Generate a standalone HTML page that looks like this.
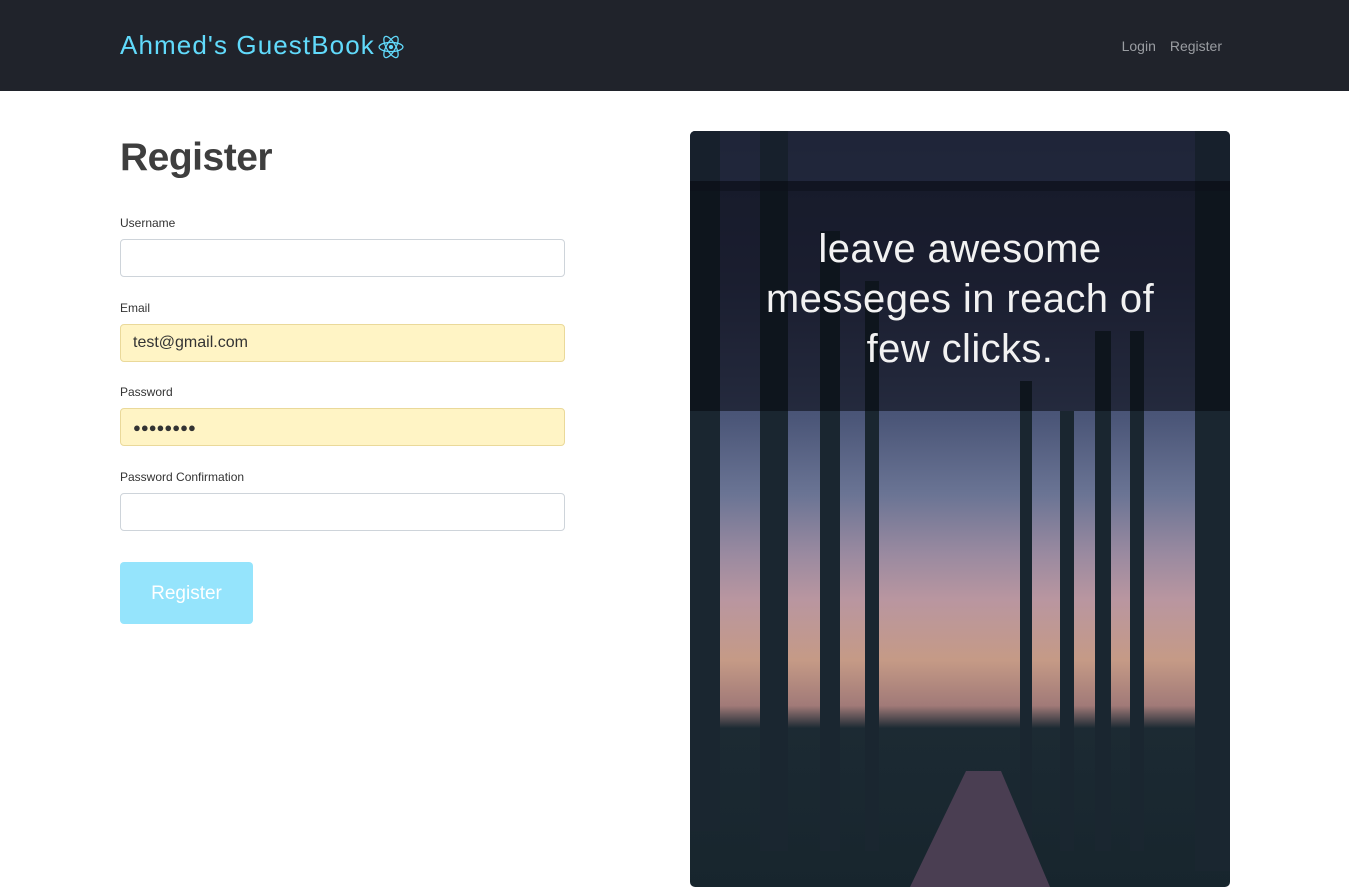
<!DOCTYPE html>
<html><head><meta charset="utf-8"><style>
*{box-sizing:border-box;margin:0;padding:0}
body{width:1349px;height:887px;overflow:hidden;background:#fff;font-family:"Liberation Sans",sans-serif;position:relative}
nav{position:absolute;left:0;top:0;width:1349px;height:91px;background:#20232b}
.brand{position:absolute;left:120px;top:30px;font-size:26px;color:#61dafb;letter-spacing:1.1px}
.links{position:absolute;right:127px;top:38px;font-size:14px;color:#9a9da2}
.links span{margin-left:14px}
h1{position:absolute;left:120px;top:136px;font-size:39px;font-weight:bold;color:#3e3e3e;letter-spacing:-0.5px}
label{position:absolute;left:120px;font-size:12px;color:#333}
.in{position:absolute;left:120px;width:445px;height:38px;border:1px solid #ced4da;border-radius:4px;background:#fff;font-size:16px;color:#333;padding:9px 12px}
.y{background:#fff4c5;border-color:#ead99a}
.btn{position:absolute;left:120px;top:562px;width:133px;height:62px;background:#95e4fc;border-radius:4px;color:#fff;font-size:19px;text-align:center;line-height:64px}
.pic{position:absolute;left:690px;top:131px;width:540px;height:756px;border-radius:5px;overflow:hidden;
background:linear-gradient(180deg,#2a3049 0%,#343a58 20%,#4b5678 38%,#6a7494 48%,#9a8aa0 56%,#b996a0 62%,#c59a86 70%,#a17a78 76%,#1c2a33 79%,#17252d 100%)}
.band{position:absolute;left:0;top:50px;width:540px;height:230px;background:rgba(5,8,15,0.55)}
.txt{position:absolute;left:0;top:93px;width:540px;text-align:center;color:#f2f2f2;font-size:40px;line-height:50px;letter-spacing:0.4px}
.t{position:absolute;background:#1a2630}
</style></head><body>
<nav><div class="brand">Ahmed's GuestBook<svg width="26" height="26" viewBox="-12 -12 24 24" style="vertical-align:-6px;margin-left:3px"><g fill="none" stroke="#61dafb" stroke-width="1.2"><ellipse rx="11" ry="4.2"/><ellipse rx="11" ry="4.2" transform="rotate(60)"/><ellipse rx="11" ry="4.2" transform="rotate(120)"/></g><circle r="2" fill="#61dafb"/></svg></div>
<div class="links"><span>Login</span><span>Register</span></div></nav>
<h1>Register</h1>
<label style="top:216px">Username</label><div class="in" style="top:239px"></div>
<label style="top:301px">Email</label><div class="in y" style="top:324px">test@gmail.com</div>
<label style="top:385px">Password</label><div class="in y" style="top:408px;font-size:13px;letter-spacing:0;padding-top:11px">●●●●●●●●</div>
<label style="top:470px">Password Confirmation</label><div class="in" style="top:493px"></div>
<div class="btn">Register</div>
<div class="pic">
<div class="t" style="left:0;top:0;width:30px;height:700px"></div>
<div class="t" style="left:70px;top:0;width:28px;height:720px"></div>
<div class="t" style="left:130px;top:100px;width:20px;height:620px"></div>
<div class="t" style="left:175px;top:150px;width:14px;height:570px"></div>
<div class="t" style="left:330px;top:250px;width:12px;height:470px"></div>
<div class="t" style="left:370px;top:280px;width:14px;height:440px"></div>
<div class="t" style="left:405px;top:200px;width:16px;height:520px"></div>
<div class="t" style="left:440px;top:200px;width:14px;height:520px"></div>
<div class="t" style="left:505px;top:0;width:35px;height:740px"></div>
<div class="t" style="left:0;top:0;width:540px;height:60px;background:rgba(20,25,40,0.5)"></div>
<div class="t" style="left:220px;top:640px;width:140px;height:116px;background:#4a3e52;clip-path:polygon(40% 0,65% 0,100% 100%,0 100%)"></div>
<div class="band"></div>
<div class="txt">leave awesome<br>messeges in reach of<br>few clicks.</div>
</div>
</body></html>
